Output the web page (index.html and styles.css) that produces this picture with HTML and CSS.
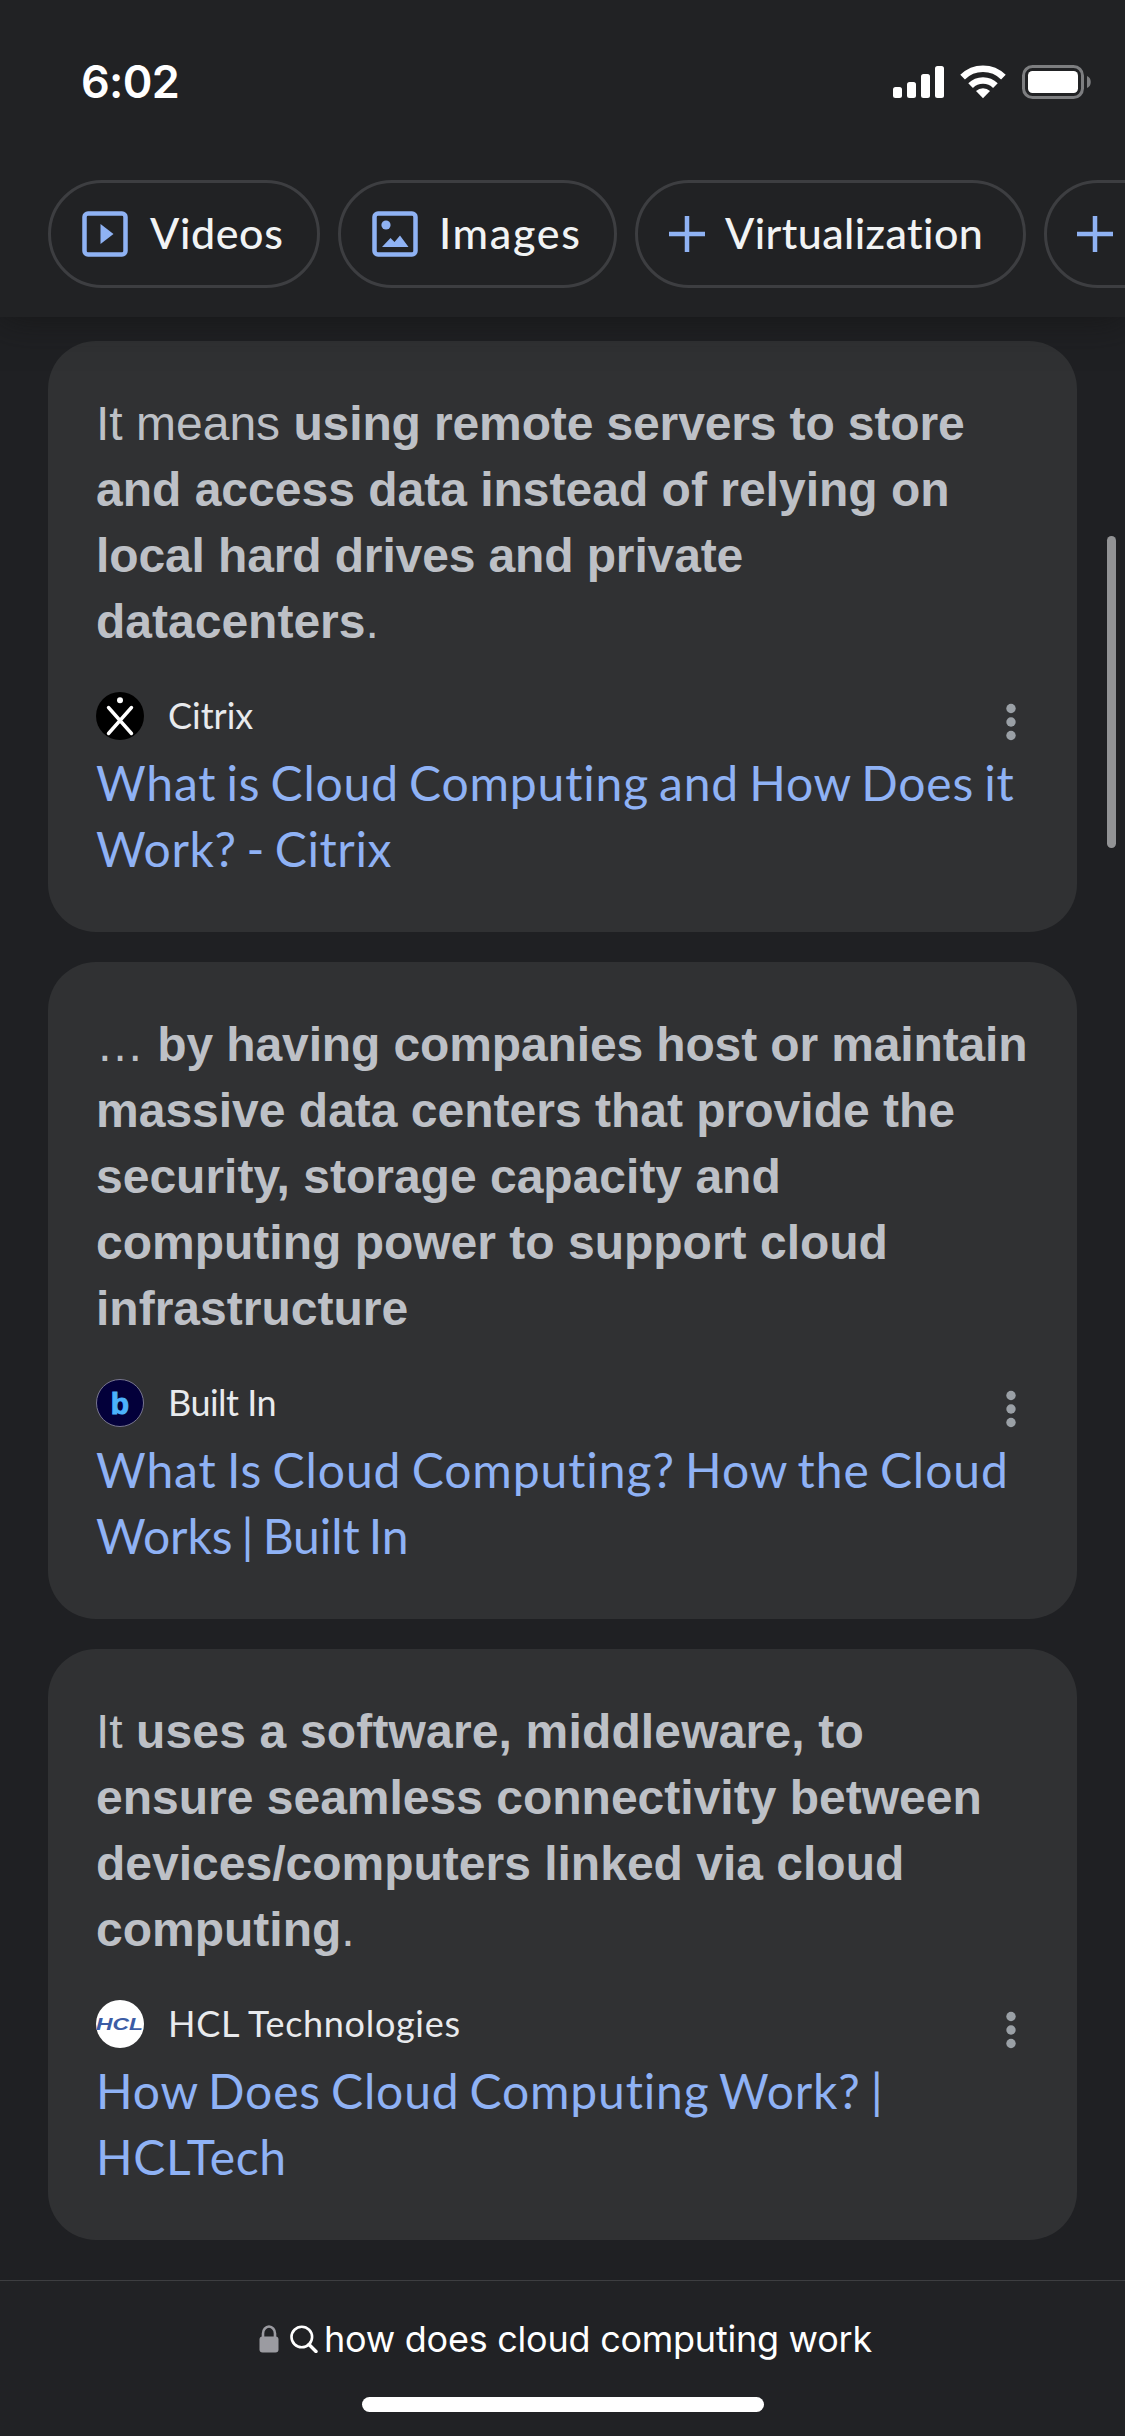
FILE: index.html
```html
<!DOCTYPE html>
<html lang="en">
<head>
<meta charset="utf-8">
<title>how does cloud computing work</title>
<link rel="stylesheet" href="styles.css">
</head>
<body>
<div class="screen">
  <header class="top">
    <div class="status">
      <span class="time">6:02</span>
      <svg class="status-icons" width="200" height="36" viewBox="0 0 200 36">
        <g fill="#fff">
          <rect x="1" y="23" width="9" height="11" rx="2.5"/>
          <rect x="15" y="18" width="9" height="16" rx="2.5"/>
          <rect x="29" y="10" width="9" height="24" rx="2.5"/>
          <rect x="43" y="2" width="9" height="32" rx="2.5"/>
          <path d="M91 34.200l-7-7.200a10.500 10.500 0 0 1 14 0z"/>
        </g>
        <g fill="none" stroke="#fff" stroke-width="6.600">
          <path d="M78.600 21.600a17.600 17.600 0 0 1 24.800 0"/>
          <path d="M70.600 13.200a29 29 0 0 1 40.800 0"/>
        </g>
        <rect x="131.500" y="2.500" width="59" height="31" rx="9" fill="none" stroke="#7d7e80" stroke-width="3"/>
        <rect x="136" y="7" width="50" height="22" rx="4.500" fill="#fff"/>
        <path d="M195 12c5 1.500 5 10.500 0 12z" fill="#7d7e80"/>
      </svg>
    </div>
    <nav class="chips">
      <a class="chip videos">
        <svg width="46" height="46" viewBox="0 0 46 46"><rect x="2.500" y="2.500" width="41" height="41" rx="3.500" fill="none" stroke="#8fb2f3" stroke-width="4.500"/><path d="M18.500 13v20l13-10z" fill="#8fb2f3"/></svg>
        <span>Videos</span>
      </a>
      <a class="chip images">
        <svg width="46" height="46" viewBox="0 0 46 46"><rect x="2.500" y="2.500" width="41" height="41" rx="3.500" fill="none" stroke="#8fb2f3" stroke-width="4.500"/><circle cx="14" cy="14" r="4.600" fill="#8fb2f3"/><path d="M10 36l8.500-9 4 4 5.500-6.500 8.500 11.500z" fill="#8fb2f3"/></svg>
        <span>Images</span>
      </a>
      <a class="chip virtual">
        <svg width="36" height="36" viewBox="0 0 36 36"><path d="M18 0v36M0 18h36" stroke="#8fb2f3" stroke-width="4.500"/></svg>
        <span>Virtualization</span>
      </a>
      <a class="chip more">
        <svg width="36" height="36" viewBox="0 0 36 36"><path d="M18 0v36M0 18h36" stroke="#8fb2f3" stroke-width="4.500"/></svg>
      </a>
    </nav>
  </header>

  <main class="results">
    <article class="card">
      <p class="snippet">It means <b><span class="snug">using remote servers to store</span><br>and access data instead of relying on<br><span class="snug">local hard drives and private</span><br>datacenters</b>.</p>
      <div class="source">
        <svg class="favicon" width="48" height="48" viewBox="0 0 48 48"><circle cx="24" cy="24" r="24" fill="#000"/><circle cx="24" cy="8.300" r="3" fill="#fff"/><path d="M12.500 15.500L35.500 41.500M35.500 15.500L12.500 41.500" stroke="#fff" stroke-width="3.400" stroke-linecap="round"/></svg>
        <span class="site">Citrix</span>
        <svg class="dots" width="10" height="38" viewBox="0 0 10 38"><g fill="#9aa0a6"><circle cx="5" cy="5.500" r="4.700"/><circle cx="5" cy="19" r="4.700"/><circle cx="5" cy="32.500" r="4.700"/></g></svg>
      </div>
      <h3 class="title"><span class="wide">What is Cloud Computing and How Does it</span><br>Work? - Citrix</h3>
    </article>

    <article class="card">
      <p class="snippet">… <b><span class="snug">by having companies host or maintain</span><br>massive data centers that provide the<br>security, storage capacity and<br>computing power to support cloud<br>infrastructure</b></p>
      <div class="source">
        <svg class="favicon" width="48" height="48" viewBox="0 0 48 48"><circle cx="24" cy="24" r="23.500" fill="#03003a" stroke="#77758f"/><text class="mark-b" x="24" y="35" text-anchor="middle" fill="#4cb2fb" stroke="#4cb2fb">b</text></svg>
        <span class="site tight">Built In</span>
        <svg class="dots" width="10" height="38" viewBox="0 0 10 38"><g fill="#9aa0a6"><circle cx="5" cy="5.500" r="4.700"/><circle cx="5" cy="19" r="4.700"/><circle cx="5" cy="32.500" r="4.700"/></g></svg>
      </div>
      <h3 class="title"><span class="wider">What Is Cloud Computing? How the Cloud</span><br><span class="narrow">Works | Built In</span></h3>
    </article>

    <article class="card">
      <p class="snippet">It <b><span class="airy">uses a software, middleware, to</span><br>ensure seamless connectivity between<br>devices/computers linked via cloud<br>computing</b>.</p>
      <div class="source">
        <svg class="favicon" width="48" height="48" viewBox="0 0 48 48"><circle cx="24" cy="24" r="24" fill="#fff"/><text class="mark-hcl" x="0" y="30" textLength="47" lengthAdjust="spacingAndGlyphs" fill="#3c5ca5">HCL</text></svg>
        <span class="site loose">HCL Technologies</span>
        <svg class="dots" width="10" height="38" viewBox="0 0 10 38"><g fill="#9aa0a6"><circle cx="5" cy="5.500" r="4.700"/><circle cx="5" cy="19" r="4.700"/><circle cx="5" cy="32.500" r="4.700"/></g></svg>
      </div>
      <h3 class="title"><span class="wide">How Does Cloud Computing Work? |</span><br>HCLTech</h3>
    </article>
  </main>

  <footer class="bottom">
    <div class="address">
      <svg class="lock" width="20" height="28" viewBox="0 0 20 28"><path d="M4 13V8.500a6 7 0 0 1 12 0V13" fill="none" stroke="#9b9ba1" stroke-width="2.600"/><rect x="0.500" y="11.500" width="19" height="16" rx="3" fill="#9b9ba1"/></svg>
      <svg class="glass" width="28" height="28" viewBox="0 0 28 28"><circle cx="11.800" cy="12" r="10.300" fill="none" stroke="#fff" stroke-width="2.600"/><path d="M19 19.500l7 7" stroke="#fff" stroke-width="3.400" stroke-linecap="round"/></svg>
      <span class="query">how does cloud computing work</span>
    </div>
    <div class="home"></div>
  </footer>
  <div class="scrollbar"></div>
</div>
</body>
</html>
```
FILE: styles.css
```css
* { box-sizing: border-box; }
body { margin: 0; background: #202124; }
.screen {
  position: relative;
  width: 1125px;
  height: 2436px;
  overflow: hidden;
  display: flex;
  flex-direction: column;
  background: #1f2023;
  font-family: Lato, "Liberation Sans", sans-serif;
  font-variant-ligatures: none;
}
.top {
  z-index: 1;
  height: 317px;
  flex: none;
  background: #212224;
  box-shadow: 0 0 36px rgba(20, 20, 20, .8);
}
.status {
  height: 180px;
  padding: 64px 33px 0 81px;
  display: flex;
  justify-content: space-between;
}
.time {
  font: 600 45px/36px Inter, sans-serif;
  letter-spacing: -.7px;
  color: #fff;
}
.chips {
  display: flex;
  gap: 18px;
  padding-left: 48px;
}
.chip {
  height: 108px;
  flex: none;
  display: flex;
  align-items: center;
  border: 3px solid #3d3e41;
  border-radius: 54px;
  font-size: 43px;
  font-weight: 500;
  color: #f1f3f4;
  white-space: nowrap;
}
.chip span { margin-top: -3px; }
.videos { width: 272px; padding-left: 31px; gap: 22px; letter-spacing: .6px; }
.images { width: 279px; padding-left: 31px; gap: 21px; letter-spacing: 1.7px; }
.virtual { width: 391px; padding-left: 31px; gap: 20px; letter-spacing: .4px; }
.more { width: 300px; padding-left: 30px; }
.results {
  flex: 1;
  padding: 24px 48px 0;
  display: flex;
  flex-direction: column;
  gap: 30px;
}
.card {
  padding: 50px 48px 50px;
  background: #303133;
  border-radius: 48px;
}
.snippet {
  margin: 0 0 37px;
  font: 400 48px/66px "Liberation Sans", Arial, sans-serif;
  color: #bdc0c6;
  white-space: nowrap;
}
.snug { letter-spacing: -.13px; }
.airy { letter-spacing: .16px; }
.source {
  height: 48px;
  display: flex;
  align-items: center;
  margin-bottom: 10px;
}
.site {
  margin: -3px 0 0 24px;
  font-size: 36px;
  line-height: 48px;
  color: #e8eaed;
}
.tight { letter-spacing: -.5px; }
.loose { letter-spacing: .7px; }
.dots { margin: 11px 13px 0 auto; }
.title {
  margin: 0;
  font-size: 48px;
  font-weight: 400;
  line-height: 66px;
  letter-spacing: .6px;
  word-spacing: -3px;
  color: #8fb2f5;
  white-space: nowrap;
}
.wide { letter-spacing: .83px; }
.wider { letter-spacing: .93px; }
.narrow { letter-spacing: -.1px; }
.mark-b { font: 700 30px "Liberation Sans", sans-serif; }
.mark-hcl { font: italic 700 17px "Liberation Sans", sans-serif; }
.bottom {
  height: 156px;
  flex: none;
  border-top: 1px solid #3d3e41;
  background: #212225;
}
.address {
  display: flex;
  align-items: center;
  height: 28px;
  margin: 44px 0 0 259px;
}
.glass { margin-left: 11px; }
.query {
  margin-left: 6px;
  font: 400 36px/28px Inter, sans-serif;
  letter-spacing: -.25px;
  color: #fff;
  white-space: nowrap;
}
.home {
  width: 402px;
  height: 15px;
  margin: 44px 0 0 362px;
  border-radius: 8px;
  background: #fff;
}
.scrollbar {
  position: absolute;
  top: 536px;
  right: 9px;
  width: 9px;
  height: 312px;
  border-radius: 5px;
  background: #929395;
}
```
